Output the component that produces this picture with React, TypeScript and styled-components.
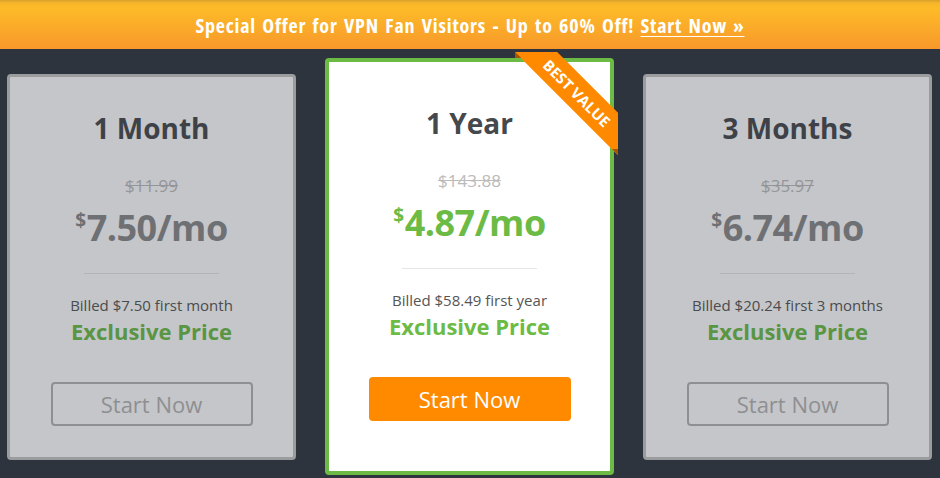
import React from "react";
import styled, { createGlobalStyle } from "styled-components";

const GlobalStyle = createGlobalStyle`
  html, body { margin: 0; padding: 0; }
  body {
    background: #2e343e;
    font-family: "Open Sans", "Liberation Sans", sans-serif;
  }
  * { box-sizing: border-box; }
`;

const Page = styled.div`
  width: 940px;
  height: 478px;
  background: #2e343e;
  overflow: hidden;
`;

const Banner = styled.div`
  height: 49px;
  display: flex;
  align-items: center;
  justify-content: center;
  background: linear-gradient(#d9a02a 0px, #f6b52a 3px, #fdbb28 8px, #f8982b 49px);
`;

const BannerText = styled.div`
  color: #fff;
  font-size: 20px;
  font-weight: 700;
  font-stretch: 87.5%;
  letter-spacing: 0.8px;
  word-spacing: 2px;
  white-space: nowrap;
  padding-top: 1px;
`;

const BannerLink = styled.a`
  color: #fff;
  text-decoration: underline;
  text-underline-offset: 3px;
  text-decoration-thickness: 1px;
`;

const Plans = styled.div`
  display: flex;
  align-items: center;
  gap: 29px;
  padding: 9px 0 0 7px;
`;

const Card = styled.div<{ $featured?: boolean }>`
  position: relative;
  width: 289px;
  display: flex;
  flex-direction: column;
  align-items: center;
  background: #fff;
  border-radius: 4px;
  border: ${(p) => (p.$featured ? "4px solid #6cbb45" : "3px solid #c4c4c4")};
  opacity: ${(p) => (p.$featured ? 1 : 0.72)};
  padding: ${(p) => (p.$featured ? "43px 0 50px" : "33px 0 31px")};
`;

const Title = styled.h2`
  margin: 0;
  font-size: 28px;
  line-height: 36px;
  font-weight: 700;
  color: #45484c;
`;

const OldPrice = styled.div`
  margin-top: 29px;
  font-size: 17px;
  line-height: 22px;
  color: #bbbbbb;
  text-decoration: line-through;
`;

const Price = styled.div<{ $featured?: boolean }>`
  margin-top: 9px;
  font-size: 36px;
  line-height: 44px;
  font-weight: 700;
  letter-spacing: -0.5px;
  color: ${(p) => (p.$featured ? "#6cbb45" : "#888888")};
`;

const Currency = styled.span`
  font-size: 19px;
  line-height: 1;
  vertical-align: 14px;
  margin-right: 1px;
`;

const Divider = styled.hr`
  margin: 23px 0 0;
  width: 135px;
  height: 1px;
  border: 0;
  background: #e6e6e6;
`;

const Billed = styled.div`
  margin-top: 21px;
  font-size: 15px;
  line-height: 20px;
  color: #555555;
`;

const Exclusive = styled.div`
  margin-top: 2px;
  font-size: 22px;
  line-height: 28px;
  font-weight: 700;
  color: #6cbb45;
`;

const Button = styled.a<{ $featured?: boolean }>`
  margin-top: 37px;
  width: 202px;
  height: 44px;
  display: flex;
  align-items: center;
  justify-content: center;
  border-radius: 4px;
  font-size: 22px;
  text-decoration: none;
  background: ${(p) => (p.$featured ? "#ff8a00" : "transparent")};
  color: ${(p) => (p.$featured ? "#ffffff" : "#b3b3b3")};
  border: ${(p) => (p.$featured ? "none" : "2px solid #b3b3b3")};
`;

const Ribbon = styled.div`
  position: absolute;
  top: -10px;
  right: -8px;
  width: 103px;
  height: 103px;
  overflow: hidden;
`;

const RibbonBand = styled.div`
  position: absolute;
  left: -23px;
  top: 26px;
  width: 170px;
  height: 30px;
  transform: rotate(45deg);
  background: #ff8a00;
  color: #fff;
  font-size: 15px;
  font-weight: 700;
  line-height: 30px;
  text-align: center;
  z-index: 1;
`;

const Fold = styled.span<{ $corner: "tl" | "br" }>`
  position: absolute;
  width: 0;
  height: 0;
  z-index: 2;
  ${(p) =>
    p.$corner === "tl"
      ? `left: 0; top: 0; border-left: 6px solid #a65600; border-top: 6px solid transparent;`
      : `right: 0; bottom: 0; border-right: 6px solid #a65600; border-bottom: 6px solid transparent;`}
`;

type Plan = {
  title: string;
  old: string;
  price: string;
  billed: string;
  featured?: boolean;
};

const plans: Plan[] = [
  { title: "1 Month", old: "$11.99", price: "7.50/mo", billed: "Billed $7.50 first month" },
  { title: "1 Year", old: "$143.88", price: "4.87/mo", billed: "Billed $58.49 first year", featured: true },
  { title: "3 Months", old: "$35.97", price: "6.74/mo", billed: "Billed $20.24 first 3 months" },
];

export default function App() {
  return (
    <Page>
      <GlobalStyle />
      <Banner>
        <BannerText>
          Special Offer for VPN Fan Visitors - Up to 60% Off! <BannerLink href="#">Start Now »</BannerLink>
        </BannerText>
      </Banner>
      <Plans>
        {plans.map((p) => (
          <Card key={p.title} $featured={p.featured}>
            {p.featured && (
              <Ribbon>
                <Fold $corner="tl" />
                <RibbonBand>BEST VALUE</RibbonBand>
                <Fold $corner="br" />
              </Ribbon>
            )}
            <Title>{p.title}</Title>
            <OldPrice>{p.old}</OldPrice>
            <Price $featured={p.featured}>
              <Currency>$</Currency>
              {p.price}
            </Price>
            <Divider />
            <Billed>{p.billed}</Billed>
            <Exclusive>Exclusive Price</Exclusive>
            <Button href="#" $featured={p.featured}>
              Start Now
            </Button>
          </Card>
        ))}
      </Plans>
    </Page>
  );
}
